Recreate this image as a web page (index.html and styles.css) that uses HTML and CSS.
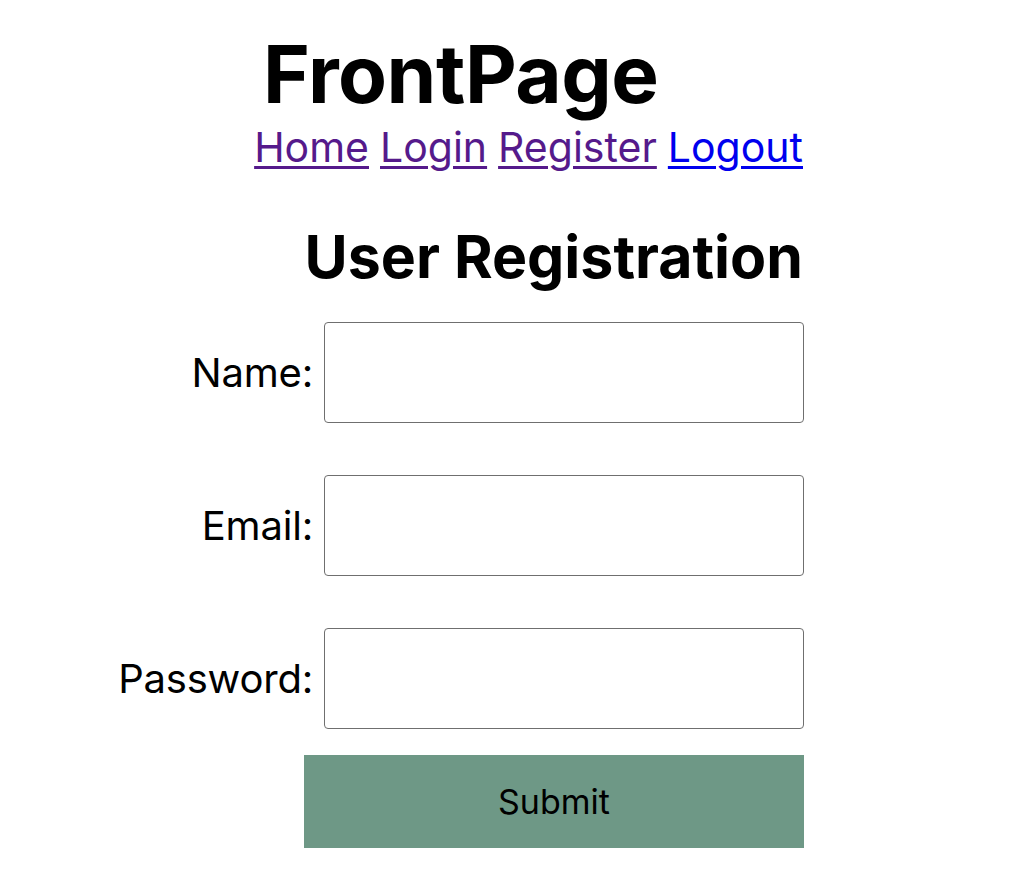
FILE: index.html
```html
<!DOCTYPE html>
<html>
<head>
<meta charset="utf-8">
<title>FrontPage</title>
<link rel="stylesheet" href="styles.css">
</head>
<body>
<div class="page">
  <header class="site-header">
    <h1 class="brand">FrontPage</h1>
    <nav class="nav">
      <a class="nav-link visited" href="#home">Home</a>
      <a class="nav-link visited" href="#login">Login</a>
      <a class="nav-link visited" href="#register">Register</a>
      <a class="nav-link" href="#logout">Logout</a>
    </nav>
  </header>
  <main class="content">
    <h2 class="title">User Registration</h2>
    <form class="form">
      <div class="row">
        <label class="label" for="name">Name:</label>
        <input class="field" id="name" type="text">
      </div>
      <div class="row">
        <label class="label" for="email">Email:</label>
        <input class="field" id="email" type="email">
      </div>
      <div class="row">
        <label class="label" for="password">Password:</label>
        <input class="field" id="password" type="password">
      </div>
      <button class="submit" type="button">Submit</button>
    </form>
  </main>
</div>
</body>
</html>
```
FILE: styles.css
```css
html, body {
  margin: 0;
  padding: 0;
  background: #ffffff;
}
body {
  font-family: Inter, "Liberation Sans", sans-serif;
  color: #000;
}
.page {
  width: 804px;
  display: flex;
  flex-direction: column;
  align-items: flex-end;
}
.site-header {
  display: flex;
  flex-direction: column;
  align-items: flex-end;
  width: 100%;
}
.brand {
  align-self: flex-start;
  margin: 26px 0 0 263px;
  font-size: 80px;
  font-weight: 700;
  line-height: 96px;
  letter-spacing: -0.5px;
}
.nav {
  display: flex;
  gap: 11px;
  margin-top: 1px;
  margin-right: 1px;
}
.nav-link {
  font-size: 41px;
  line-height: 48px;
  color: #0000ee;
  text-decoration: underline;
  text-decoration-thickness: 3px;
  text-underline-offset: 4px;
}
.nav-link.visited {
  color: #551a8b;
}
.content {
  display: flex;
  flex-direction: column;
  align-items: flex-end;
}
.title {
  margin: 53px 1px 0 0;
  font-size: 59px;
  font-weight: 700;
  line-height: 66px;
}
.form {
  display: flex;
  flex-direction: column;
  align-items: flex-end;
  gap: 52px;
  margin-top: 32px;
}
.row {
  display: flex;
  align-items: center;
  gap: 11px;
}
.label {
  font-size: 40px;
  font-weight: 400;
  letter-spacing: -0.2px;
}
.field {
  box-sizing: border-box;
  width: 480px;
  height: 101px;
  border: 1px solid #6f6f6f;
  border-radius: 4px;
  margin: 0;
  padding: 0 10px;
  font-size: 30px;
  background: #fff;
}
.submit {
  box-sizing: border-box;
  width: 500px;
  height: 93px;
  margin-top: -26px;
  border: none;
  background: #6e9886;
  color: #000;
  font-family: Inter, "Liberation Sans", sans-serif;
  font-size: 34px;
  cursor: pointer;
}
```
